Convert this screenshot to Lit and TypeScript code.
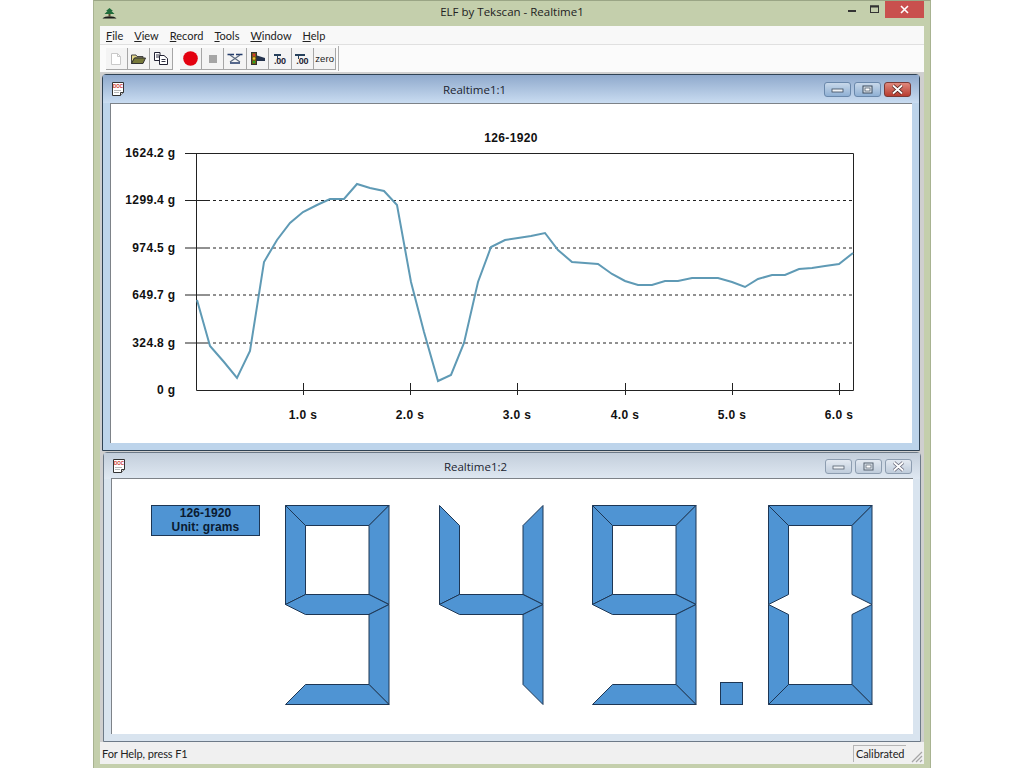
import { LitElement, html, css, svg } from "lit";
import { customElement, property } from "lit/decorators.js";

const CURVE: [number, number][] = [[197,300],[210,346],[224,362],[237,378],[250,351],[264,262],[277,240],[290,223],[303,212],[317,205],[330,199],[344,199],[357,184],[370,188],[384,191],[397,205],[411,282],[424,332],[438,381],[451,375],[464,343],[478,282],[491,247],[505,240],[518,238],[531,236],[545,233],[558,250],[572,262],[585,263],[598,264],[612,274],[625,281],[638,285],[652,285],[665,281],[678,281],[692,278],[705,278],[718,278],[732,282],[745,287],[758,279],[772,275],[785,275],[799,269],[812,268],[825,266],[839,264],[853,253]];
const Y_LABELS: [string, number][] = [["1624.2 g",153],["1299.4 g",200.5],["974.5 g",248],["649.7 g",295],["324.8 g",343],["0 g",390]];
const X_LABELS: [string, number][] = [["1.0 s",303],["2.0 s",410],["3.0 s",517],["4.0 s",625],["5.0 s",732],["6.0 s",839]];

@customElement("seven-digit")
class SevenDigit extends LitElement {
  @property() segs = "";
  static styles = css`
    :host { display: block; width: 105px; height: 201px; }
    svg { display: block; }
    polygon { fill: #4f94d3; stroke: #1d3654; stroke-width: 1; stroke-linejoin: miter; }
  `;
  render() {
    const a = 0.5, b = 20.5, c = 84, d = 104, t = 0.5, u = 20.5, m1 = 89.5, m = 99.5, m2 = 109.5, l = 179.5, v = 199.5;
    const map: Record<string, number[][]> = {
      t: [[a,t],[d,t],[c,u],[b,u]],
      f: [[a,t],[b,u],[b,m1],[a,m]],
      r: [[d,t],[d,m],[c,m1],[c,u]],
      g: [[a,m],[b,m1],[c,m1],[d,m],[c,m2],[b,m2]],
      e: [[a,m],[b,m2],[b,l],[a,v]],
      s: [[d,m],[d,v],[c,l],[c,m2]],
      o: [[a,v],[b,l],[c,l],[d,v]],
    };
    return html`<svg width="105" height="201" viewBox="0 0 105 201">
      ${this.segs.split("").map(k => svg`<polygon points=${map[k].map(p => p.join(",")).join(" ")}></polygon>`)}
    </svg>`;
  }
}

@customElement("child-window")
class ChildWindow extends LitElement {
  @property() label = "";
  @property({ type: Boolean }) active = false;
  static styles = css`
    :host { display: block; }
    .win { box-sizing: border-box; height: 100%; display: flex; flex-direction: column; border: 1px solid #6d7a88; border-radius: 4px 4px 0 0; padding: 0 7px 7px; background: #d9e4ef; }
    .win.active { border-color: #2f4254; background: #bdd4eb; }
    .bar { flex: none; box-sizing: border-box; display: flex; align-items: center; height: 26px; margin: 0 -7px; padding: 1px 8px 0 8px; background: linear-gradient(#c3cedb, #dfe8f2); }
    .active .bar { height: 28px; background: linear-gradient(#8fa9cc, #c9dcf1); }
    .icon { flex: none; width: 14px; height: 15px; display: block; }
    .label { flex: 1; text-align: center; font: 11.5px "Open Sans", "Liberation Sans", sans-serif; color: #1c2430; }
    .btns { display: flex; gap: 3px; }
    .btn { box-sizing: border-box; width: 27px; height: 15px; border: 1px solid #8d9db0; border-radius: 3px; background: linear-gradient(#e3e9f1, #bfccdb); display: flex; align-items: center; justify-content: center; }
    .active .btn { border-color: #6a88ab; background: linear-gradient(#c8d8ea, #8fb0d4); }
    .active .btn.close { border-color: #7a3a36; background: linear-gradient(#e0897d, #b73c30); }
    .btn svg { display: block; }
    .body { flex: 1; min-height: 0; background: #fff; border-top: 1px solid #7d8288; border-left: 1px solid #7d8288; box-sizing: border-box; overflow: hidden; }
    .win:not(.active) .body { margin-top: -1px; }
  `;
  render() {
    const a = this.active;
    const glyph = a ? "#3a4a5c" : "#55606e";
    return html`<div class="win ${a ? "active" : ""}">
      <div class="bar">
        <svg class="icon" viewBox="0 0 14 15">
          <path d="M1.500 .500H12.500V10.500L9.500 13.500H1.500Z" fill="#fff" stroke="#333" />
          <path d="M9.500 13.500V10.500H12.500" fill="#ddd" stroke="#333" />
          <text x="2" y="6" font-size="4.500" font-weight="700" font-family="Liberation Sans" fill="#c8322d">DOC</text>
          <path d="M3 8.500H10M3 10.500H8" stroke="#999" stroke-width=".7" />
        </svg>
        <div class="label">${this.label}</div>
        <div class="btns">
          <div class="btn"><svg width="13" height="7" viewBox="0 0 13 7"><rect x="1" y="3" width="11" height="3" fill="#eef2f6" stroke=${glyph} stroke-width=".8"/></svg></div>
          <div class="btn"><svg width="11" height="9" viewBox="0 0 11 9"><rect x="1" y="1" width="9" height="7" fill="#dfe6ee" stroke=${glyph}/><rect x="3" y="3" width="5" height="3" fill="#fff" stroke=${glyph} stroke-width=".7"/></svg></div>
          <div class="btn close"><svg width="13" height="11" viewBox="0 0 13 11"><path d="M2 1.500L11 9.500M11 1.500L2 9.500" stroke=${a ? "#4a1e1a" : "#667"} stroke-width="3.400"/><path d="M2 1.500L11 9.500M11 1.500L2 9.500" stroke="#fff" stroke-width="1.800"/></svg></div>
        </div>
      </div>
      <div class="body"><slot></slot></div>
    </div>`;
  }
}

@customElement("app-root")
class AppRoot extends LitElement {
  static styles = css`
    :host { display: block; width: 1024px; height: 768px; background: #fff; font-family: "Open Sans", "Liberation Sans", sans-serif; }
    .main { box-sizing: border-box; margin-left: 93px; width: 838px; height: 768px; background: #c4cfac; padding: 0 6px 4px 6px; border: 1px solid #a8b391; border-top-color: #9aa585; border-bottom: none; display: flex; flex-direction: column; }
    .title { flex: none; height: 25px; display: flex; position: relative; }
    .title .logo { display: block; margin: 7px 0 0 2px; }
    .title .text { position: absolute; left: 0; right: 0; top: 3px; text-align: center; font-size: 11.5px; color: #222; }
    .ctrls { margin-left: auto; display: flex; align-items: flex-start; }
    .ctrl { width: 21px; height: 17px; display: flex; align-items: center; justify-content: center; }
    .ctrl.min { width: 26px; }
    .ctrl.x { width: 39px; background: #c9504e; }
    .menu { flex: none; height: 18px; background: #f8f8f8; display: flex; align-items: center; padding-left: 6px; gap: 11px; font: 11px Lato, "Open Sans", sans-serif; color: #222; border-bottom: 1px solid #e0e0e0; }
    .menu u { text-underline-offset: 1px; }
    .tools { flex: none; box-sizing: border-box; height: 28px; background: #fbfbfb; display: flex; padding: 3px 0 0 5.500px; border-bottom: 1px solid #d0d0d0; }
    .tb { flex: none; box-sizing: border-box; width: 22.400px; height: 22px; border-right: 1px solid #a6a6a6; border-bottom: 1px solid #a6a6a6; display: flex; align-items: center; justify-content: center; background: #f4f4f4; }
    .tb svg { display: block; }
    .sp { flex: none; width: 7px; }
    .tbend { margin: -2px 0 0 2px; width: 1px; height: 25px; background: #b0b0b0; }
    .num { font: 700 9px "Liberation Sans", sans-serif; color: #223; line-height: 9px; letter-spacing: -.2px; position: relative; top: 1px; display: flex; flex-direction: column; align-items: center; }
    .num i { display: block; position: relative; width: 7px; height: 2px; background: #26405c; margin: 0 0 1px -4px; }
    .num i.wide { width: 10px; }
    .num i::after { content: ""; position: absolute; left: 3px; top: 2px; width: 1px; height: 3px; background: #26405c; }
    .zero { font: 9.500px "Liberation Sans", sans-serif; color: #222; letter-spacing: .1px; }
    .mdi { flex: 1; min-height: 0; background: #cfcfcf; display: flex; flex-direction: column; gap: 1px; padding-top: 1px; }
    .w1 { height: 377px; margin-left: 2px; width: 818px; }
    .w2 { height: 290px; margin-left: 3px; width: 818px; }
    .chart { display: block; }
    .chart text { font: 700 12px "Liberation Sans", sans-serif; fill: #111; letter-spacing: .35px; }
    .panel { display: flex; align-items: flex-start; padding: 26px 0 0 39px; }
    .badge { flex: none; box-sizing: border-box; width: 109px; height: 31px; margin-right: 25px; background: #4f94d3; border: 1px solid #1d3654; text-align: center; font: 700 12px/14px "Liberation Sans", sans-serif; color: #0a1a30; letter-spacing: .1px; }
    .panel seven-digit { flex: none; }
    .d2 { margin-left: 48.500px; }
    .dot { flex: none; box-sizing: border-box; width: 23px; height: 23px; margin: 177px 24.500px 0 23px; background: #4f94d3; border: 1px solid #1d3654; }
    .status { flex: none; height: 22px; background: #f0f0f0; display: flex; align-items: center; font: 11px Lato, "Open Sans", sans-serif; letter-spacing: -.1px; color: #222; padding-left: 2px; }
    .cal { margin-left: auto; box-sizing: border-box; width: 53px; height: 17px; line-height: 15px; margin-top: 1px; border-left: 1px solid #b5b5b5; border-top: 1px solid #b5b5b5; padding-left: 2px; white-space: nowrap; }
    .grip { width: 18px; height: 18px; margin: 3px 0 0 0; display: block; }
  `;
  render() {
    const pts = CURVE.map(p => p.join(",")).join(" ");
    return html`<div class="main">
      <div class="title">
        <svg class="logo" width="15" height="11" viewBox="0 0 15 11">
          <path d="M7.500 0L11 3H9.500L12.500 6H2.500L5.500 3H4Z" fill="#1f6b3a"/>
          <path d="M6.500 6H8.500V8H6.500Z" fill="#5a4a2a"/>
          <path d="M0.500 10.500C3 7.500 12 7.500 14.500 10.500Z" fill="#1b1b1b"/>
        </svg>
        <div class="text">ELF by Tekscan - Realtime1</div>
        <div class="ctrls">
          <div class="ctrl min"><svg width="9" height="9" viewBox="0 0 9 9"><rect x="1" y="5" width="8" height="2" fill="#333"/></svg></div>
          <div class="ctrl"><svg width="11" height="9" viewBox="0 0 11 9"><rect x="1.500" y="1" width="8" height="6.500" fill="none" stroke="#333"/><rect x="1" y="0.500" width="9" height="2" fill="#333"/></svg></div>
          <div class="ctrl x"><svg width="9" height="9" viewBox="0 0 9 9"><path d="M1 1L8 8M8 1L1 8" stroke="#fff" stroke-width="1.600"/></svg></div>
        </div>
      </div>
      <div class="menu">
        <span><u>F</u>ile</span><span><u>V</u>iew</span><span><u>R</u>ecord</span><span><u>T</u>ools</span><span><u>W</u>indow</span><span><u>H</u>elp</span>
      </div>
      <div class="tools">
        <div class="tb"><svg width="12" height="14" viewBox="0 0 12 14"><path d="M1.500 1.500H7.500L10.500 4.500V12.500H1.500Z" fill="#fff" stroke="#c9c9c9"/><path d="M7.500 1.500V4.500H10.500" fill="none" stroke="#c9c9c9"/></svg></div>
        <div class="tb"><svg width="15" height="10" viewBox="0 0 15 10"><path d="M.500 1H5L6 2.500H12V4H3.500L.500 9.500Z" fill="#e6d98a" stroke="#444"/><path d="M3.500 4H14.500L12 9.500H.500Z" fill="#77793a" stroke="#333"/></svg></div>
        <div class="tb"><svg width="14" height="13" viewBox="0 0 14 13"><path d="M.500 .500H6V8.500H.500Z" fill="#fff" stroke="#223"/><path d="M5.500 3.500H10L13.500 6.500V12.500H5.500Z" fill="#fff" stroke="#223"/><path d="M2 3H5M2 5H5M7.500 7.500H11.500M7.500 9.500H11.500" stroke="#334" stroke-width="1"/></svg></div>
        <div class="sp"></div>
        <div class="tb"><svg width="15" height="15" viewBox="0 0 15 15"><circle cx="7.500" cy="7.500" r="7.300" fill="#e3000f"/></svg></div>
        <div class="tb"><svg width="10" height="10" viewBox="0 0 10 10"><rect x="1" y="1" width="8" height="8" fill="#a5a5a5"/></svg></div>
        <div class="tb"><svg width="16" height="11" viewBox="0 0 16 11"><path d="M.500 1.500H7M9 1.500H15.500" stroke="#223a6a" stroke-width="1.300"/><path d="M3 2L13 9M13 2L3 9" stroke="#5c6b80" stroke-width="1.200"/><path d="M3 10H13" stroke="#223a6a" stroke-width="1.500"/></svg></div>
        <div class="tb"><svg width="16" height="13" viewBox="0 0 16 13"><rect x="1.500" y=".500" width="5" height="12" fill="#7a5d12" stroke="#333"/><circle cx="4" cy="3" r="1.200" fill="#d33"/><circle cx="4" cy="6.500" r="1.200" fill="#ec3"/><circle cx="4" cy="10" r="1.200" fill="#2a2"/><path d="M7 3.500L15 6V9H7Z" fill="#24334d"/></svg></div>
        <div class="tb"><span class="num"><i></i>.00</span></div>
        <div class="tb"><span class="num"><i class="wide"></i>.00</span></div>
        <div class="tb"><span class="zero">zero</span></div>
        <div class="tbend"></div>
      </div>
      <div class="mdi">
        <child-window class="w1" label="Realtime1:1" active>
          <svg class="chart" width="801" height="339" viewBox="111 104 801 339">
            <text x="511" y="142" text-anchor="middle">126-1920</text>
            ${Y_LABELS.slice(1, 5).map(([, y]) => svg`<line x1="207" x2="853" y1=${y} y2=${y} stroke="#222" stroke-dasharray="3 3"></line><line x1="185" x2="207" y1=${y} y2=${y} stroke="#222"></line>`)}
            <path d="M185 153.500H853.500V390.500H196.500V153" fill="none" stroke="#222"></path>
            ${X_LABELS.map(([, x]) => svg`<line x1=${x + 0.5} x2=${x + 0.5} y1="383" y2="395" stroke="#222"></line>`)}
            <polyline points=${pts} fill="none" stroke="#5f9ab5" stroke-width="2"></polyline>
            ${Y_LABELS.map(([t, y]) => svg`<text x="175.500" y=${y + 3.500} text-anchor="end">${t}</text>`)}
            ${X_LABELS.map(([t, x]) => svg`<text x=${x} y="419" text-anchor="middle">${t}</text>`)}
          </svg>
        </child-window>
        <child-window class="w2" label="Realtime1:2">
          <div class="panel">
            <div class="badge">126-1920<br />Unit: grams</div>
            <seven-digit segs="tfrgso"></seven-digit>
            <seven-digit class="d2" segs="frgs"></seven-digit>
            <seven-digit class="d2" segs="tfrgso"></seven-digit>
            <div class="dot"></div>
            <seven-digit segs="tfreso"></seven-digit>
          </div>
        </child-window>
      </div>
      <div class="status">
        <span>For Help, press F1</span>
        <span class="cal">Calibrated</span>
        <svg class="grip" viewBox="0 0 18 18"><path d="M16 6L6 16M16 10L10 16M16 14L14 16" stroke="#a5a5a5" stroke-width="1.200"/></svg>
      </div>
    </div>`;
  }
}
